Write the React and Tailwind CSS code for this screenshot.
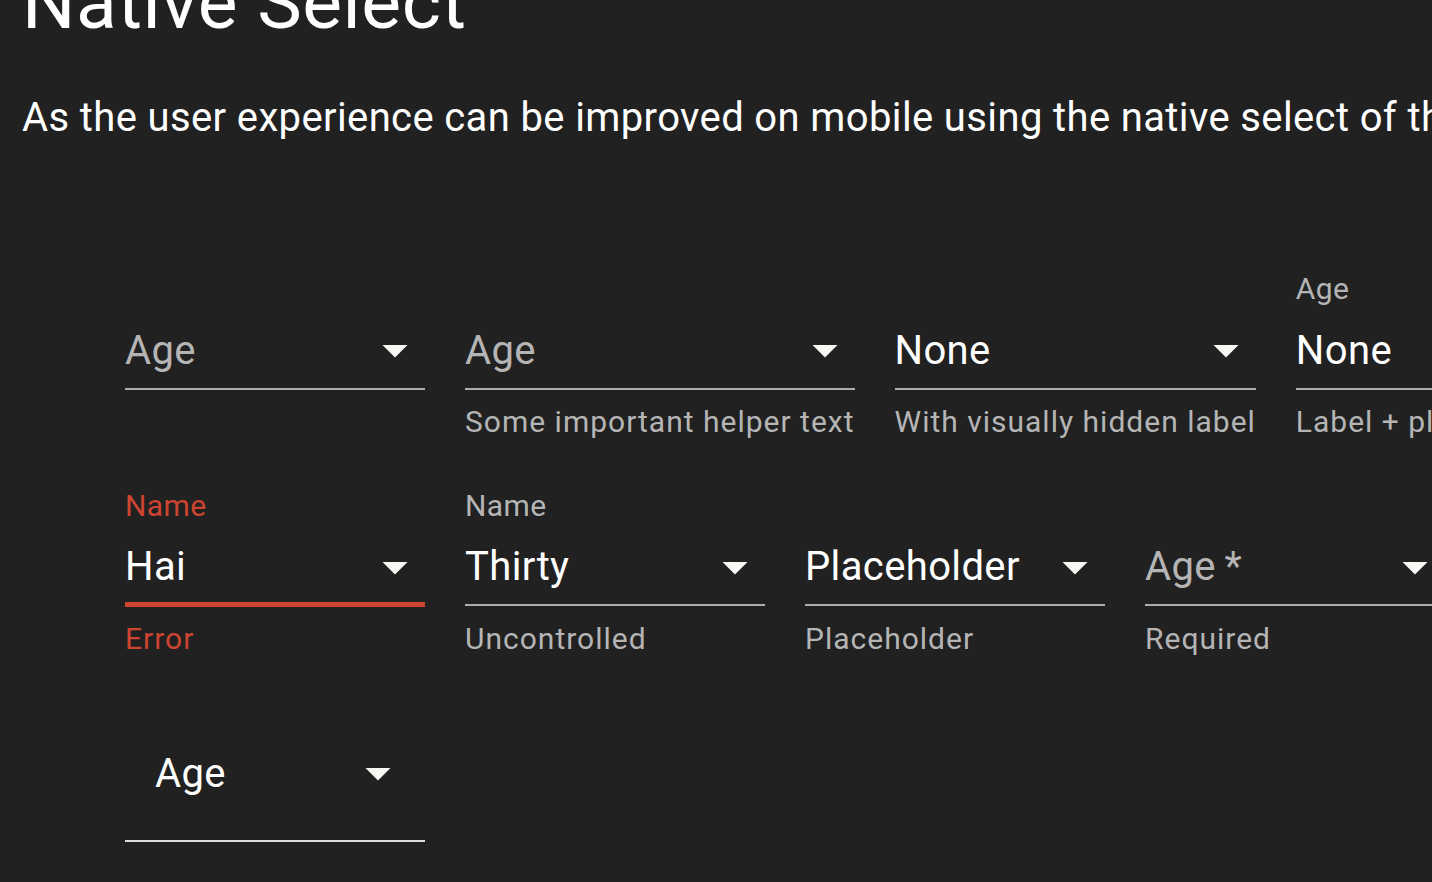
import React from 'react';

function Arrow({ className }) {
  return (
    <svg viewBox="0 0 24 24" className={className} fill="#f7f7f4" aria-hidden="true">
      <path d="M7 10l5 5 5-5z" />
    </svg>
  );
}

function Field({ label, value, muted, helper, error }) {
  const underline = error
    ? 'border-b-[5px] border-[#cd4430] pb-[6px]'
    : 'border-b-[2.5px] border-[#adadad] pb-[8.5px]';
  return (
    <div className="m-[20px] flex min-w-[300px] shrink-0 flex-col">
      <div className="h-[40px]">
        {label && (
          <div className={`pt-[3.75px] text-[30px] leading-[30px] tracking-[0.375px] ${error ? 'text-[#cd4430]' : 'text-[#b5b5b5]'}`}>
            {label}
          </div>
        )}
      </div>
      <div className={`relative pt-[11.5px] pr-[60px] ${underline}`}>
        <div className={`whitespace-nowrap text-[40px] leading-[57.5px] tracking-[0.375px] ${muted ? 'text-[#b5b5b5]' : 'text-white'}`}>
          {value}
        </div>
        <Arrow className="absolute right-0 top-[10px] h-[60px] w-[60px]" />
      </div>
      {helper && (
        <div className={`mt-[7.5px] whitespace-nowrap text-[30px] leading-[49.8px] tracking-[1px] ${error ? 'text-[#cd4430]' : 'text-[#b5b5b5]'}`}>
          {helper}
        </div>
      )}
    </div>
  );
}

export default function App() {
  return (
    <div className="h-[882px] w-[1432px] overflow-hidden bg-[#212121] font-['Roboto',sans-serif]">
      <h1 className="ml-[22px] mt-[-35px] whitespace-nowrap text-[75px] font-normal leading-[75px] tracking-[0.55px] text-white">
        Native Select
      </h1>
      <p className="ml-[22px] mt-[48px] whitespace-nowrap text-[40px] leading-[60px] tracking-[0.375px] text-white">
        As the user experience can be improved on mobile using the native select of the platform, we allow such pattern.
      </p>

      <div className="ml-[105px] mt-[102px] flex flex-col">
        <div className="flex items-start">
          <Field value="Age" muted />
          <Field value="Age" muted helper="Some important helper text" />
          <Field value="None" helper="With visually hidden label" />
          <Field label="Age" value="None" helper="Label + placeholder" />
        </div>

        <div className="flex items-start">
          <Field label="Name" value="Hai" helper="Error" error />
          <Field label="Name" value="Thirty" helper="Uncontrolled" />
          <Field value="Placeholder" helper="Placeholder" />
          <Field value={'Age\u2009*'} muted helper="Required" />
        </div>

        <div className="flex items-start">
          <div className="m-[20px] w-[300px] shrink-0">
            <div className="relative border-b-[2.5px] border-[#dedede] pb-[37.5px] pl-[30px] pr-[60px] pt-[41px]">
              <div className="text-[40px] leading-[57.5px] tracking-[0.375px] text-white">Age</div>
              <Arrow className="absolute right-[17.5px] top-[39px] h-[60px] w-[60px]" />
            </div>
          </div>
        </div>
      </div>
    </div>
  );
}
